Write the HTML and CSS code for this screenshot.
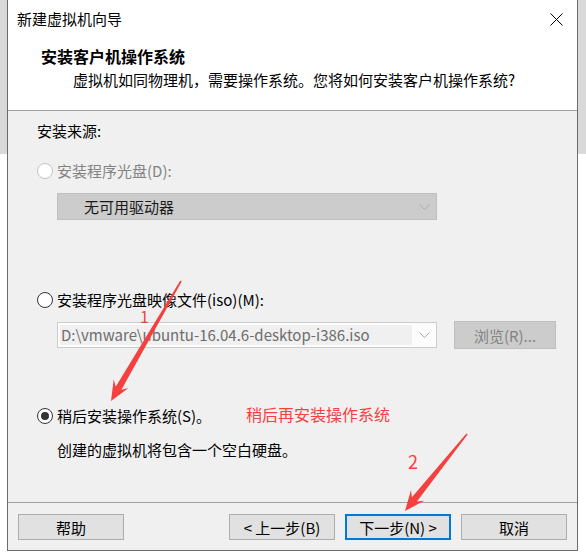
FILE: index.html
```html
<!DOCTYPE html>
<html lang="zh-CN">
<head>
<meta charset="utf-8">
<title>新建虚拟机向导</title>
<link rel="stylesheet" href="styles.css">
</head>
<body>
<div class="window">
  <div class="titlebar">
    <span class="title">新建虚拟机向导</span>
    <svg class="close" width="13" height="13" viewBox="0 0 13 13"><path d="M0.5 0.5 L12.5 12.5 M12.5 0.5 L0.5 12.5" stroke="#000" stroke-width="1"/></svg>
  </div>
  <div class="header">
    <div class="heading">安装客户机操作系统</div>
    <div class="subtitle">虚拟机如同物理机，需要操作系统。您将如何安装客户机操作系统?</div>
  </div>
  <div class="content">
    <div class="source">安装来源:</div>
    <div class="option option-disc disabled">
      <span class="radio"></span><span>安装程序光盘(D):</span>
    </div>
    <div class="drive">
      <span>无可用驱动器</span>
      <svg class="chev" width="11" height="6" viewBox="0 0 11 6"><path d="M0.5 0.5 L5.5 5.5 L10.5 0.5" fill="none" stroke="#a9a9a9"/></svg>
    </div>
    <div class="option option-iso">
      <span class="radio"></span><span>安装程序光盘映像文件(iso)(M):</span>
    </div>
    <div class="iso-row">
      <div class="combo">
        <span class="combo-text">D:\vmware\ubuntu-16.04.6-desktop-i386.iso</span>
        <svg class="chev" width="11" height="6" viewBox="0 0 11 6"><path d="M0.5 0.5 L5.5 5.5 L10.5 0.5" fill="none" stroke="#a9a9a9"/></svg>
      </div>
      <div class="browse">浏览(R)...</div>
    </div>
    <div class="option option-later">
      <span class="radio checked"></span><span>稍后安装操作系统(S)。</span>
    </div>
    <div class="desc">创建的虚拟机将包含一个空白硬盘。</div>
  </div>
  <div class="footer">
    <div class="btn">帮助</div>
    <div class="btn back">&lt;&nbsp;上一步(B)</div>
    <div class="btn primary">下一步(N)&nbsp;&gt;</div>
    <div class="btn">取消</div>
  </div>
</div>
<div class="annotations">
  <svg class="arrows" width="586" height="559" viewBox="0 0 586 559">
    <polygon fill="#f5403e" points="111,401 128.5,388 121.4,389.8 181.69,281.4 180.31,280.6 115.7,386.8 113.7,379.3"/>
    <polygon fill="#f5403e" points="405,511 424.2,500.8 416.9,501.4 467.62,434.5 466.38,433.5 411.9,497.3 411,490"/>
  </svg>
  <span class="note note-1">1</span>
  <span class="note note-2">2</span>
  <span class="note note-text">稍后再安装操作系统</span>
</div>
</body>
</html>
```
FILE: styles.css
```css
html, body {
  margin: 0;
  padding: 0;
}
body {
  width: 586px;
  height: 559px;
  overflow: hidden;
  position: relative;
  background: linear-gradient(#d9d9d9 0, #d9d9d9 154px, #ffffff 154px);
  font-family: "Noto Sans CJK SC", "Noto Sans", sans-serif;
  font-size: 15px;
  color: #000;
}
.window {
  margin-left: 7px;
  width: 571px;
  height: 551px;
  box-sizing: border-box;
  border: 1px solid #6b6b6b;
  border-top: 0;
  background: #f0f0f0;
  display: flex;
  flex-direction: column;
}
.titlebar {
  flex: none;
  height: 38px;
  background: #fff;
  display: flex;
  align-items: center;
  justify-content: space-between;
  padding: 0 14px 0 9px;
}
.title {
  line-height: 20px;
}
.header {
  flex: none;
  height: 73px;
  box-sizing: border-box;
  background: #fff;
  border-bottom: 1px solid #a0a0a0;
  padding-top: 8px;
}
.heading {
  font-weight: bold;
  font-size: 16px;
  margin-left: 33px;
  line-height: 20px;
}
.subtitle {
  margin-left: 65px;
  margin-top: 4px;
  line-height: 20px;
}
.content {
  flex: 1;
  padding-left: 29px;
}
.source {
  margin-top: 10px;
  line-height: 20px;
}
.option {
  display: flex;
  align-items: center;
  gap: 4px;
  height: 20px;
  line-height: 20px;
}
.option-disc { margin-top: 20px; }
.option-iso { margin-top: 70px; }
.option-later { margin-top: 57px; }
.disabled { color: #838383; }
.radio {
  flex: none;
  width: 16px;
  height: 16px;
  box-sizing: border-box;
  border: 1px solid #333;
  border-radius: 50%;
  background: #fff;
  display: flex;
  align-items: center;
  justify-content: center;
}
.disabled .radio {
  border-color: #c4c4c4;
}
.radio.checked::after {
  content: "";
  width: 8px;
  height: 8px;
  border-radius: 50%;
  background: #333;
}
.drive {
  margin: 12px 0 0 20px;
  width: 380px;
  height: 27px;
  box-sizing: border-box;
  background: #cccccc;
  border: 1px solid #bfbfbf;
  display: flex;
  align-items: center;
  justify-content: space-between;
  padding: 0 6px 0 26px;
  color: #1a1a1a;
}
.iso-row {
  margin: 11px 0 0 20px;
  height: 28px;
  display: flex;
  align-items: center;
  gap: 17px;
}
.combo {
  width: 380px;
  height: 26px;
  box-sizing: border-box;
  border: 1px solid #cccccc;
  background: #fcfcfc;
  display: flex;
  align-items: center;
  justify-content: space-between;
  padding: 2px 6px 2px 2px;
}
.combo-text {
  width: 352px;
  height: 20px;
  line-height: 20px;
  background: #f0f0f0;
  color: #6d6d6d;
  padding-left: 1px;
  box-sizing: border-box;
  white-space: nowrap;
  overflow: hidden;
}
.browse {
  width: 102px;
  height: 28px;
  box-sizing: border-box;
  background: #cccccc;
  border: 1px solid #bfbfbf;
  color: #838383;
  display: flex;
  align-items: center;
  justify-content: center;
}
.desc {
  margin: 14px 0 0 20px;
  line-height: 20px;
}
.footer {
  flex: none;
  height: 48px;
  box-sizing: border-box;
  border-top: 1px solid #a0a0a0;
  padding: 11px 10px 0 10px;
  display: flex;
  align-items: flex-start;
  gap: 10px;
}
.btn {
  width: 106px;
  height: 26px;
  box-sizing: border-box;
  background: #e1e1e1;
  border: 1px solid #adadad;
  display: flex;
  align-items: center;
  justify-content: center;
  white-space: pre;
}
.btn.back {
  margin-left: auto;
}
.btn.primary {
  border: 2px solid #0078d7;
}
.annotations {
  position: absolute;
  left: 0;
  top: 0;
  width: 586px;
  height: 559px;
  pointer-events: none;
}
.arrows {
  position: absolute;
  left: 0;
  top: 0;
}
.note {
  position: absolute;
  color: #f5403e;
}
.note-1 {
  left: 140px;
  top: 310px;
  font-size: 16px;
  line-height: 12px;
}
.note-2 {
  left: 408px;
  top: 451px;
  font-size: 18px;
  line-height: 20px;
}
.note-text {
  left: 246px;
  top: 404px;
  font-size: 16px;
  line-height: 20px;
}
```
